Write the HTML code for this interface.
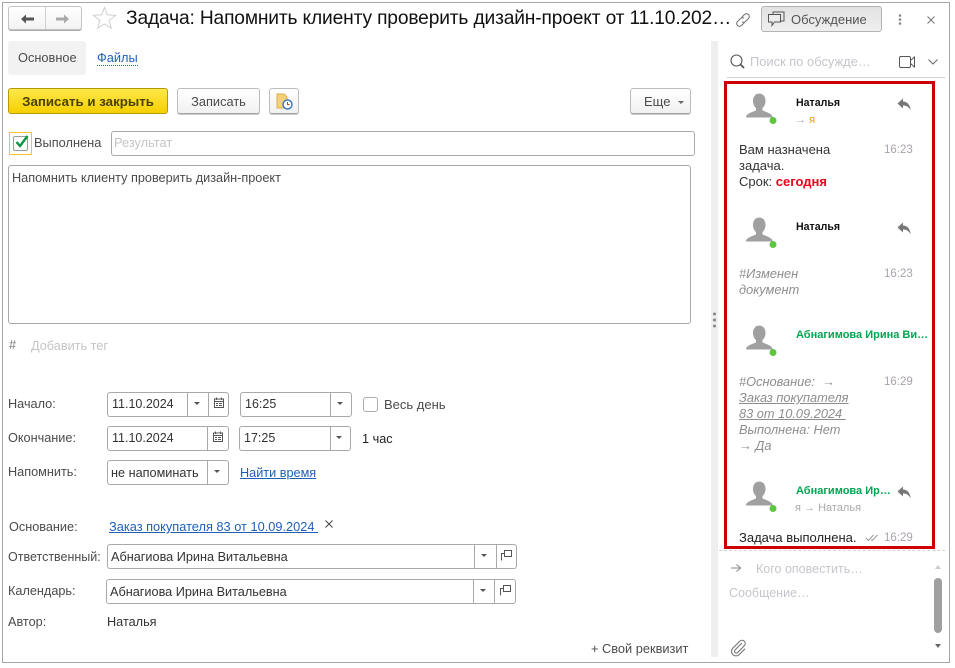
<!DOCTYPE html>
<html><head><meta charset="utf-8">
<style>
html,body{margin:0;padding:0;background:#fff}
body{width:955px;height:668px;position:relative;overflow:hidden;font-family:"Liberation Sans",sans-serif;font-size:12.7px;color:#4b4b4b}
.a{position:absolute;white-space:nowrap}
.t{position:absolute;white-space:nowrap;line-height:16px}
.f{position:absolute;box-sizing:border-box;border:1px solid #a9a9a9;border-radius:3px;background:#fff;height:25px}
.s{position:absolute;top:0;bottom:0;width:1px;background:#a9a9a9}
.btn{position:absolute;box-sizing:border-box;border:1px solid #bcbcbc;border-bottom-color:#a5a5a5;border-radius:3px;background:linear-gradient(#fff,#f1f1f1);box-shadow:0 1px 0 #c9c9c9;text-align:center;line-height:26px;height:26px}
.ar{position:absolute;width:0;height:0;border-left:3px solid transparent;border-right:3px solid transparent;border-top:3px solid #555}
.l{color:#1f5fb8;text-decoration:underline;font-size:12.8px}
.g{color:#00a651;font-weight:bold;font-size:11px}
.b{color:#111;font-weight:bold;font-size:10.6px}
.tm{color:#aaa2ac;font-size:11.500px}
.c{font-size:13px}
.it{font-style:italic;color:#8d8d8d;font-size:12.800px}
.ph{color:#c8c4cc}
</style></head><body>
<div class="a" style="left:2px;top:2px;width:948px;height:661px;box-sizing:border-box;border:1px solid #a6a6a6"></div>

<div class="a" style="left:8px;top:6px;width:74px;height:24px;box-sizing:border-box;border:1px solid #c4c4c4;border-radius:3px;background:linear-gradient(#fff,#f3f3f3);box-shadow:0 1px 0 #aaa"></div>
<div class="a" style="left:45px;top:7px;width:1px;height:22px;background:#d0d0d0"></div>
<svg class="a" style="left:18px;top:12px" width="60" height="14" viewBox="0 0 60 14"><path d="M6 7H16" stroke="#555" stroke-width="3"/><path d="M3 7L8 2.500V11.500Z" fill="#555"/><path d="M38 7H48" stroke="#aaa" stroke-width="3"/><path d="M51 7L46 2.500V11.500Z" fill="#aaa"/></svg>
<svg class="a" style="left:92px;top:6px" width="26" height="24" viewBox="0 0 26 24"><path d="M12.500 1.500L15.300 8.800L23.500 9.400L17.200 14.400L19.300 22.200L12.500 18L5.700 22.200L7.800 14.400L1.500 9.400L9.700 8.800Z" fill="none" stroke="#cfcfcf" stroke-width="1"/></svg>
<div class="t" style="left:126px;top:8px;font-size:19.2px;letter-spacing:-.15px;line-height:22px;color:#111">Задача: Напомнить клиенту проверить дизайн-проект от 11.10.202…</div>
<svg class="a" style="left:734px;top:11px" width="18" height="18" viewBox="0 0 18 18" fill="none" stroke="#777" stroke-width="1.100"><path d="M7.500 6.500L10.500 3.500a2.800 2.800 0 0 1 4 4L11.500 10.500a2.800 2.800 0 0 1-3.500.3"/><path d="M10.500 11.500L7.500 14.500a2.800 2.800 0 0 1-4-4L6.500 7.500a2.800 2.800 0 0 1 3.500-.3"/></svg>
<div class="a" style="left:761px;top:6px;width:121px;height:26px;box-sizing:border-box;border:1px solid #b4b4b4;border-radius:3px;background:linear-gradient(#e2e2e2,#efefef)"></div>
<svg class="a" style="left:767px;top:11px" width="18" height="16" viewBox="0 0 18 16" fill="none" stroke="#555" stroke-width="1"><path d="M6 3V1H17V10H14"/><path d="M1.500 3.500H13.500V11H7.500L5 14.500V11H1.500Z" fill="#ececec"/></svg>
<div class="t" style="left:791px;top:12px;color:#555;font-size:13px">Обсуждение</div>
<svg class="a" style="left:896px;top:13px" width="8" height="14"><circle cx="4" cy="2.500" r="1.300" fill="#888"/><circle cx="4" cy="6.500" r="1.300" fill="#888"/><circle cx="4" cy="10.500" r="1.300" fill="#888"/></svg>
<svg class="a" style="left:926px;top:15px" width="10" height="10"><path d="M1.500 1.500L8.500 8.500M8.500 1.500L1.500 8.500" stroke="#777" stroke-width="1"/></svg>

<div class="a" style="left:8px;top:41px;width:78px;height:34px;background:#f2f2f2;border-radius:3px"></div>
<div class="t" style="left:18px;top:50px;font-size:12.8px">Основное</div>
<div class="t" style="left:97px;top:51px;color:#1f5fb8;border-bottom:1px dotted #1f5fb8;line-height:14px;font-size:12.8px">Файлы</div>

<div class="a" style="left:8px;top:88px;width:160px;height:26px;box-sizing:border-box;border:1px solid #b59b00;border-radius:3px;background:linear-gradient(#ffe84a,#f5cf00);text-align:center;line-height:25px;font-weight:bold;font-size:13.300px;color:#4a4100">Записать и закрыть</div>
<div class="btn" style="left:177px;top:88px;width:83px;font-size:12.8px">Записать</div>
<div class="btn" style="left:269px;top:88px;width:30px"></div>
<svg class="a" style="left:276px;top:93px" width="18" height="17" viewBox="0 0 18 17"><path d="M1 1H8L11 4V15H1Z" fill="#f5d27a" stroke="#d9ad4c"/><circle cx="11.500" cy="11.500" r="4.500" fill="#fff" stroke="#3f79c8" stroke-width="1.500"/><path d="M11.500 9V11.500H13.500" stroke="#c0392b" fill="none"/></svg>
<div class="btn" style="left:630px;top:88px;width:61px;text-align:left;padding-left:13px;font-size:13px">Еще</div>
<div class="ar" style="left:678px;top:101px;border-top-color:#666"></div>

<div class="a" style="left:9px;top:132px;width:23px;height:23px;box-sizing:border-box;border:1px solid #f3c535"></div>
<div class="a" style="left:13px;top:136px;width:15px;height:15px;box-sizing:border-box;border:1px solid #9c9c9c;border-radius:2px"></div>
<svg class="a" style="left:14px;top:133px" width="16" height="16" viewBox="0 0 16 16"><path d="M2.500 9L6 13L13.500 3" fill="none" stroke="#0f9347" stroke-width="2.400"/></svg>
<div class="t" style="left:34px;top:135px;font-size:12.8px">Выполнена</div>
<div class="f" style="left:111px;top:131px;width:584px"></div>
<div class="t" style="left:114px;top:135px;color:#c5c5c5;font-size:12.8px">Результат</div>

<div class="a" style="left:8px;top:165px;width:683px;height:159px;box-sizing:border-box;border:1px solid #a9a9a9;border-radius:3px"></div>
<div class="t" style="left:12px;top:170px">Напомнить клиенту проверить дизайн-проект</div>
<div class="t" style="left:9px;top:337px;color:#777">#</div>
<div class="t" style="left:31px;top:338px;color:#c5c5c5">Добавить тег</div>

<div class="t" style="left:8px;top:396px">Начало:</div>
<div class="f" style="left:107px;top:392px;width:122px"><div class="s" style="left:79px"></div><div class="s" style="left:100px"></div></div>
<div class="t" style="left:112px;top:396px;font-size:12.500px;color:#333">11.10.2024</div>
<div class="ar" style="left:194px;top:402px"></div>
<svg class="a" style="left:213px;top:397px" width="12" height="12" viewBox="0 0 12 12"><path d="M1.500 2H10.500V10.500H1.500ZM1.500 2V4.500H10.500" fill="none" stroke="#555"/><path d="M3.500 .5V3M8.500 .5V3" stroke="#555"/><path d="M3 6.500H5M6 6.500H9M3 8.500H5M6 8.500H9" stroke="#555"/></svg>
<div class="f" style="left:240px;top:392px;width:112px"><div class="s" style="left:89px"></div></div>
<div class="t" style="left:245px;top:396px;font-size:12.500px;color:#333">16:25</div>
<div class="ar" style="left:337px;top:402px"></div>
<div class="a" style="left:363px;top:397px;width:15px;height:15px;box-sizing:border-box;border:1px solid #ababab;border-radius:3px"></div>
<div class="t" style="left:384px;top:397px;font-size:13px">Весь день</div>

<div class="t" style="left:8px;top:430px">Окончание:</div>
<div class="f" style="left:107px;top:426px;width:122px"><div class="s" style="left:99px"></div></div>
<div class="t" style="left:112px;top:430px;font-size:12.500px;color:#333">11.10.2024</div>
<svg class="a" style="left:212px;top:431px" width="12" height="12" viewBox="0 0 12 12"><path d="M1.500 2H10.500V10.500H1.500ZM1.500 2V4.500H10.500" fill="none" stroke="#555"/><path d="M3.500 .5V3M8.500 .5V3" stroke="#555"/><path d="M3 6.500H5M6 6.500H9M3 8.500H5M6 8.500H9" stroke="#555"/></svg>
<div class="f" style="left:239px;top:426px;width:112px"><div class="s" style="left:90px"></div></div>
<div class="t" style="left:244px;top:430px;font-size:12.500px;color:#333">17:25</div>
<div class="ar" style="left:336px;top:436px"></div>
<div class="t" style="left:362px;top:431px;color:#222">1 час</div>

<div class="t" style="left:8px;top:464px">Напомнить:</div>
<div class="f" style="left:107px;top:460px;width:122px"><div class="s" style="left:99px"></div></div>
<div class="t" style="left:111px;top:465px;color:#333">не напоминать</div>
<div class="ar" style="left:214px;top:470px"></div>
<div class="t l" style="left:240px;top:465px;font-size:12.7px">Найти время</div>

<div class="t" style="left:9px;top:519px">Основание:</div>
<div class="t l" style="left:109px;top:519px">Заказ покупателя 83 от 10.09.2024&nbsp;</div>
<svg class="a" style="left:324px;top:519px" width="10" height="10"><path d="M1.500 1.500L8.500 8.500M8.500 1.500L1.500 8.500" stroke="#444" stroke-width="1"/></svg>

<div class="t" style="left:8px;top:549px;font-size:12.500px">Ответственный:</div>
<div class="f" style="left:107px;top:544px;width:410px"><div class="s" style="left:366px"></div><div class="s" style="left:388px"></div></div>
<div class="t" style="left:111px;top:549px;color:#333">Абнагиова Ирина Витальевна</div>
<div class="ar" style="left:481px;top:554px"></div>
<svg class="a" style="left:501px;top:550px" width="11" height="11" viewBox="0 0 11 11" fill="none" stroke="#555"><rect x="3.500" y=".5" width="7" height="6"/><path d="M3.500 3.500H.5V10.500"/></svg>

<div class="t" style="left:8px;top:583px">Календарь:</div>
<div class="f" style="left:106px;top:579px;width:410px"><div class="s" style="left:366px"></div><div class="s" style="left:387px"></div></div>
<div class="t" style="left:110px;top:584px;color:#333">Абнагиова Ирина Витальевна</div>
<div class="ar" style="left:480px;top:589px"></div>
<svg class="a" style="left:500px;top:585px" width="11" height="11" viewBox="0 0 11 11" fill="none" stroke="#555"><rect x="3.500" y=".5" width="7" height="6"/><path d="M3.500 3.500H.5V10.500"/></svg>

<div class="t" style="left:8px;top:614px">Автор:</div>
<div class="t" style="left:107px;top:614px;color:#333">Наталья</div>
<div class="t" style="left:591px;top:641px;font-size:12.8px">+ Свой реквизит</div>

<div class="a" style="left:711px;top:41px;width:7px;height:616px;background:#eee"></div>
<svg class="a" style="left:712px;top:312px" width="5" height="16"><circle cx="2.500" cy="2" r="1.500" fill="#888"/><circle cx="2.500" cy="8" r="1.500" fill="#888"/><circle cx="2.500" cy="14" r="1.500" fill="#888"/></svg>

<svg class="a" style="left:729px;top:53px" width="18" height="17" viewBox="0 0 18 17" fill="none" stroke="#555"><circle cx="7.500" cy="7.500" r="5.500" stroke-width="1.100"/><path d="M11.500 11.500L15 15" stroke-width="1.800"/></svg>
<div class="t ph" style="left:750px;top:54px;font-size:12.9px">Поиск по обсужде…</div>
<svg class="a" style="left:898px;top:55px" width="18" height="14" viewBox="0 0 18 14" fill="none" stroke="#555"><rect x="1.500" y="1.500" width="11" height="11" rx="1.500"/><path d="M12.500 5.500L16.500 2V12L12.500 8.500"/></svg>
<svg class="a" style="left:927px;top:58px" width="12" height="8"><path d="M1.500 1.500L6 6L10.500 1.500" fill="none" stroke="#666"/></svg>
<div class="a" style="left:727px;top:77px;width:218px;height:1px;background:#d0d0d0"></div>

<div class="a" style="left:724px;top:81px;width:211px;height:468px;box-sizing:border-box;border:3px solid #cc0000"></div>

<svg class="a" style="left:746px;top:92px" width="32" height="34" viewBox="0 0 32 34"><path d="M13 1.500c4 0 6.500 3 6.500 7.500 0 3-1.200 5.500-3 7v2.500c3 1.200 7.500 2.500 9.500 5 .5 1 .5 2 .5 2H0s0-1 .5-2c2-2.500 6.500-3.800 9.500-5V16c-1.800-1.500-3-4-3-7 0-4.500 2.500-7.500 6.500-7.500z" fill="#a0a0a0"/><circle cx="27" cy="28.500" r="3.500" fill="#5dc63f"/></svg>
<div class="t b" style="left:796px;top:95px">Наталья</div>
<svg class="a" style="left:897px;top:98px" width="14" height="13" viewBox="0 0 14 13"><path d="M6 .5L.5 5.500L6 10.500V7.500C9.500 7.500 12 9 13.500 12.500C13.500 7.500 10.500 3.500 6 3.500Z" fill="#777"/></svg>
<div class="t" style="left:795px;top:112px;font-size:11px;color:#aaa">→ <span style="color:#f59a23">я</span></div>
<div class="t c" style="left:739px;top:142px;color:#333">Вам назначена<br>задача.<br>Срок: <b style="color:#f0001a">сегодня</b></div>
<div class="t tm" style="left:884px;top:142px">16:23</div>

<svg class="a" style="left:746px;top:216px" width="32" height="34" viewBox="0 0 32 34"><path d="M13 1.500c4 0 6.500 3 6.500 7.500 0 3-1.200 5.500-3 7v2.500c3 1.200 7.500 2.500 9.500 5 .5 1 .5 2 .5 2H0s0-1 .5-2c2-2.500 6.500-3.800 9.500-5V16c-1.800-1.500-3-4-3-7 0-4.500 2.500-7.500 6.500-7.500z" fill="#a0a0a0"/><circle cx="27" cy="28.500" r="3.500" fill="#5dc63f"/></svg>
<div class="t b" style="left:796px;top:219px">Наталья</div>
<svg class="a" style="left:897px;top:222px" width="14" height="13" viewBox="0 0 14 13"><path d="M6 .5L.5 5.500L6 10.500V7.500C9.500 7.500 12 9 13.500 12.500C13.500 7.500 10.500 3.500 6 3.500Z" fill="#777"/></svg>
<div class="t it" style="left:739px;top:266px">#Изменен<br>документ</div>
<div class="t tm" style="left:884px;top:266px">16:23</div>

<svg class="a" style="left:746px;top:324px" width="32" height="34" viewBox="0 0 32 34"><path d="M13 1.500c4 0 6.500 3 6.500 7.500 0 3-1.200 5.500-3 7v2.500c3 1.200 7.500 2.500 9.500 5 .5 1 .5 2 .5 2H0s0-1 .5-2c2-2.500 6.500-3.800 9.500-5V16c-1.800-1.500-3-4-3-7 0-4.500 2.500-7.500 6.500-7.500z" fill="#a0a0a0"/><circle cx="27" cy="28.500" r="3.500" fill="#5dc63f"/></svg>
<div class="t g" style="left:796px;top:327px">Абнагимова Ирина Ви…</div>
<div class="t it" style="left:739px;top:374px">#Основание: &nbsp;→<br><u>Заказ покупателя</u><br><u>83 от 10.09.2024&nbsp;</u><br>Выполнена: Нет<br>→ Да</div>
<div class="t tm" style="left:884px;top:374px">16:29</div>

<svg class="a" style="left:746px;top:480px" width="32" height="34" viewBox="0 0 32 34"><path d="M13 1.500c4 0 6.500 3 6.500 7.500 0 3-1.200 5.500-3 7v2.500c3 1.200 7.500 2.500 9.500 5 .5 1 .5 2 .5 2H0s0-1 .5-2c2-2.500 6.500-3.800 9.500-5V16c-1.800-1.500-3-4-3-7 0-4.500 2.500-7.500 6.500-7.500z" fill="#a0a0a0"/><circle cx="27" cy="28.500" r="3.500" fill="#5dc63f"/></svg>
<div class="t g" style="left:796px;top:483px">Абнагимова Ир…</div>
<svg class="a" style="left:897px;top:486px" width="14" height="13" viewBox="0 0 14 13"><path d="M6 .5L.5 5.500L6 10.500V7.500C9.500 7.500 12 9 13.500 12.500C13.500 7.500 10.500 3.500 6 3.500Z" fill="#777"/></svg>
<div class="t" style="left:795px;top:500px;font-size:11px;color:#aaa">я → Наталья</div>
<div class="t c" style="left:739px;top:530px;color:#222">Задача выполнена.</div>
<svg class="a" style="left:865px;top:533px" width="14" height="9" viewBox="0 0 14 9" fill="none" stroke="#999"><path d="M1 5L3.500 7.500L8.500 2M6 7L7 7.500L12.500 2"/></svg>
<div class="t tm" style="left:884px;top:530px">16:29</div>

<div class="a" style="left:719px;top:550px;width:226px;height:0;border-top:1px dashed #d4d4d4"></div>
<svg class="a" style="left:730px;top:563px" width="12" height="10" viewBox="0 0 12 10" fill="none" stroke="#888"><path d="M1 5H10M6.500 1.500L10.500 5L6.500 8.500"/></svg>
<div class="t ph" style="left:756px;top:561px;font-size:12.500px">Кого оповестить…</div>
<div class="t ph" style="left:729px;top:585px;font-size:12.500px">Сообщение…</div>
<div class="a" style="left:934px;top:578px;width:8px;height:55px;background:#a0a0a0;border-radius:4px"></div>
<div class="a" style="left:935px;top:565px;width:0;height:0;border-left:3px solid transparent;border-right:3px solid transparent;border-bottom:4px solid #ccc"></div>
<div class="a" style="left:935px;top:644px;width:0;height:0;border-left:3px solid transparent;border-right:3px solid transparent;border-top:4px solid #666"></div>
<svg class="a" style="left:730px;top:639px" width="18" height="18" viewBox="0 0 18 18" fill="none" stroke="#777" stroke-width="1.100"><path d="M12 4L5 11a1.800 1.800 0 0 0 2.600 2.600L14.500 6.500a3.200 3.200 0 0 0-4.500-4.500L2.800 9.200a4.500 4.500 0 0 0 6.400 6.400L15 9.800"/></svg>
</body></html>
